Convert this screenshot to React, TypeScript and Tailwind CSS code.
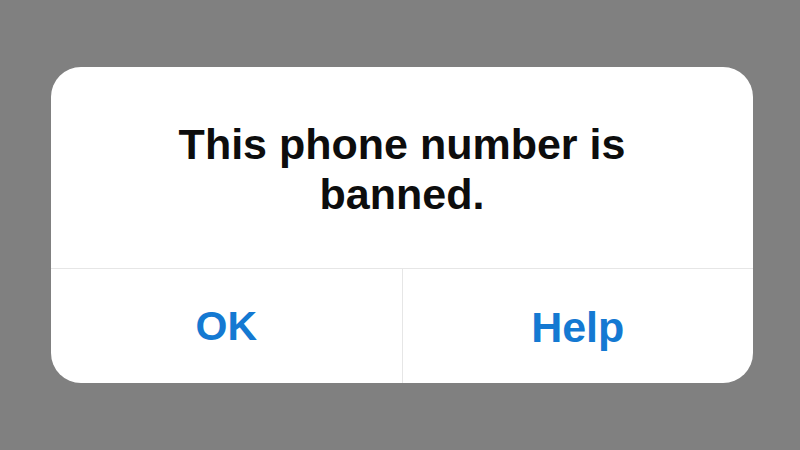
const App = () => {
  return (
    <div
      className="flex h-[450px] w-[800px] items-center justify-center bg-[#808080] pl-[4px]"
      style={{ fontFamily: '"Liberation Sans", Arial, sans-serif' }}
    >
      <div className="flex h-[316px] w-[702px] flex-col overflow-hidden rounded-[30px] bg-white">
        <div className="flex flex-1 items-center justify-center pt-[3px] text-center">
          <p className="text-[43px] font-bold leading-[50px] text-[#0d0d0d]">
            This phone number is
            <br />
            banned.
          </p>
        </div>
        <div className="flex h-[115px] border-t border-[#e6e6e6]">
          <button className="flex flex-1 items-center justify-center border-r border-[#e6e6e6] pt-[2px] text-[41px] font-bold text-[#1479d2]">
            OK
          </button>
          <button className="flex flex-1 items-center justify-center pt-[2px] text-[43px] font-bold text-[#1479d2]">
            Help
          </button>
        </div>
      </div>
    </div>
  );
};

export default App;
